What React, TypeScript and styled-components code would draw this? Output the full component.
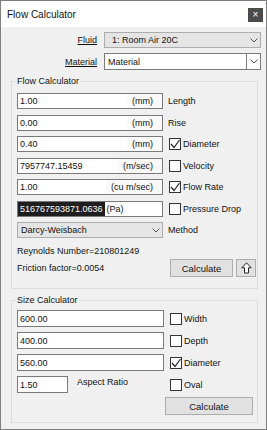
import * as React from 'react';
import styled, { createGlobalStyle } from 'styled-components';

const Global = createGlobalStyle`
  body {
    margin: 0;
    font-family: "Liberation Sans", Arial, sans-serif;
    font-size: 9px;
    color: #111;
  }
`;

const Window = styled.div`
  width: 267px;
  height: 430px;
  box-sizing: border-box;
  border: 1px solid #7f7f7f;
  background: #f0f0f0;
  display: flex;
  flex-direction: column;
`;

const TitleBar = styled.div`
  height: 26px;
  flex: 0 0 26px;
  background: #fff;
  display: flex;
  align-items: center;
  justify-content: space-between;
  padding: 1px 3px 0 6px;
  box-sizing: border-box;
  font-size: 10px;
`;

const CloseButton = styled.div`
  width: 15px;
  height: 14px;
  background: #4b4b4b;
  color: #fff;
  display: flex;
  align-items: center;
  justify-content: center;
  font-size: 10px;
  line-height: 1;
`;

const Body = styled.div`
  flex: 1;
  padding: 5px 5px 0 10px;
  display: flex;
  flex-direction: column;
`;

const TopGrid = styled.div`
  display: grid;
  grid-template-columns: 86px 157px;
  column-gap: 7px;
  row-gap: 5px;
  align-items: center;
`;

const TopLabel = styled.span`
  text-align: right;
  text-decoration: underline;
`;

const Combo = styled.div<{ $white?: boolean; $pad?: number }>`
  height: ${p => (p.$white ? 17 : 16)}px;
  box-sizing: border-box;
  border: 1px solid ${p => (p.$white ? '#7a7a7a' : '#adadad')};
  background: ${p => (p.$white ? '#fff' : '#e5e5e5')};
  display: flex;
  align-items: center;
  padding-left: ${p => p.$pad ?? 3}px;
  white-space: nowrap;
`;

const ComboText = styled.span`
  flex: 1;
`;

const ComboArrow = styled.div<{ $boxed?: boolean }>`
  width: 13px;
  height: 100%;
  display: flex;
  align-items: center;
  justify-content: center;
  border-left: ${p => (p.$boxed ? '1px solid #7a7a7a' : 'none')};
`;

const Group = styled.fieldset<{ $top: number; $bottom: number }>`
  margin: ${p => p.$top}px 3px 0 0;
  padding: 0 1px ${p => p.$bottom}px 5px;
  border: 1px solid #dcdcdc;
  min-width: 0;
`;

const Legend = styled.legend`
  padding: 0 1px;
  margin-left: -1px;
  line-height: 11px;
`;

const Rows = styled.div<{ $gap: number; $top: number }>`
  display: flex;
  flex-direction: column;
  gap: ${p => p.$gap}px;
  margin-top: ${p => p.$top}px;
`;

const Row = styled.div<{ $input: number; $h: number }>`
  display: grid;
  grid-template-columns: ${p => p.$input}px 1fr;
  column-gap: 5px;
  align-items: center;
  height: ${p => p.$h}px;
`;

const InputBox = styled.div<{ $w?: number }>`
  height: 100%;
  width: ${p => (p.$w ? `${p.$w}px` : 'auto')};
  box-sizing: border-box;
  border: 1px solid #7a7a7a;
  background: #fff;
  display: flex;
  align-items: stretch;
  white-space: nowrap;
`;

const Value = styled.span<{ $fit?: boolean; $selected?: boolean }>`
  flex: ${p => (p.$fit ? '0 0 auto' : '1')};
  display: flex;
  align-items: center;
  padding: 0 ${p => (p.$selected ? 2 : 0)}px 0 2px;
  background: ${p => (p.$selected ? '#1e1e1e' : 'transparent')};
  color: ${p => (p.$selected ? '#fff' : 'inherit')};
`;

const Unit = styled.span<{ $inline?: boolean }>`
  display: flex;
  align-items: center;
  padding: 0 9px 0 ${p => (p.$inline ? 2 : 5)}px;
  background: ${p => (p.$inline ? '#fff' : '#f9f9f9')};
`;

const SideLabel = styled.span`
  align-self: center;
`;

const Check = styled.label`
  display: flex;
  align-items: center;
  gap: 2px;
  padding-left: 1px;
`;

const Box = styled.span`
  width: 12px;
  height: 12px;
  box-sizing: border-box;
  border: 1px solid #333;
  background: #fff;
  display: flex;
  align-items: center;
  justify-content: center;
`;

const Results = styled.div`
  display: grid;
  grid-template-columns: 1fr auto;
  align-items: center;
  margin-top: 8px;
  row-gap: 3px;
`;

const Buttons = styled.div`
  display: flex;
  gap: 3px;
`;

const Button = styled.div<{ $w: number }>`
  width: ${p => p.$w}px;
  height: 18px;
  box-sizing: border-box;
  border: 1px solid #adadad;
  background: #e1e1e1;
  display: flex;
  align-items: center;
  justify-content: center;
  font-size: 9.5px;
`;

const AspectCell = styled.div`
  display: flex;
  height: 100%;
  gap: 9px;
`;

const AspectLabel = styled.span`
  padding-top: 1px;
`;

const Footer = styled.div`
  display: flex;
  justify-content: flex-end;
  margin: 4px 3px 0 0;
`;

const Chevron = () => (
  <svg width="8" height="5" viewBox="0 0 8 5">
    <polyline points="0.5,0.5 4,4 7.5,0.5" fill="none" stroke="#555" strokeWidth="1" />
  </svg>
);

const CheckBox: React.FC<{ checked?: boolean; label: string }> = ({ checked, label }) => (
  <Check>
    <Box>
      {checked && (
        <svg width="10" height="10" viewBox="0 0 10 10">
          <polyline points="1,5 4,8.5 9.5,1" fill="none" stroke="#222" strokeWidth="1.2" />
        </svg>
      )}
    </Box>
    {label}
  </Check>
);

const UpArrow = () => (
  <svg width="11" height="12" viewBox="0 0 11 12">
    <path d="M5.5 0.8 L10.2 5.8 H7.5 V11 H3.5 V5.8 H0.8 Z" fill="#fff" stroke="#222" strokeWidth="1" strokeLinejoin="round" />
  </svg>
);

export default function App() {
  return (
    <>
      <Global />
      <Window>
        <TitleBar>
          <span>Flow Calculator</span>
          <CloseButton>×</CloseButton>
        </TitleBar>
        <Body>
          <TopGrid>
            <TopLabel>Fluid</TopLabel>
            <Combo $pad={7}>
              <ComboText>1: Room Air 20C</ComboText>
              <ComboArrow><Chevron /></ComboArrow>
            </Combo>
            <TopLabel>Material</TopLabel>
            <Combo $white>
              <ComboText>Material</ComboText>
              <ComboArrow $boxed><Chevron /></ComboArrow>
            </Combo>
          </TopGrid>

          <Group $top={6} $bottom={11}>
            <Legend>Flow Calculator</Legend>
            <Rows $gap={5.5} $top={6}>
              <Row $input={146} $h={16}>
                <InputBox><Value>1.00</Value><Unit>(mm)</Unit></InputBox>
                <SideLabel>Length</SideLabel>
              </Row>
              <Row $input={146} $h={16}>
                <InputBox><Value>0.00</Value><Unit>(mm)</Unit></InputBox>
                <SideLabel>Rise</SideLabel>
              </Row>
              <Row $input={146} $h={16}>
                <InputBox><Value>0.40</Value><Unit>(mm)</Unit></InputBox>
                <CheckBox checked label="Diameter" />
              </Row>
              <Row $input={146} $h={16}>
                <InputBox><Value>7957747.15459</Value><Unit>(m/sec)</Unit></InputBox>
                <CheckBox label="Velocity" />
              </Row>
              <Row $input={146} $h={16}>
                <InputBox><Value>1.00</Value><Unit>(cu m/sec)</Unit></InputBox>
                <CheckBox checked label="Flow Rate" />
              </Row>
              <Row $input={146} $h={16}>
                <InputBox><Value $fit $selected>516767593871.0636</Value><Unit $inline>(Pa)</Unit></InputBox>
                <CheckBox label="Pressure Drop" />
              </Row>
              <Row $input={146} $h={16}>
                <Combo>
                  <ComboText>Darcy-Weisbach</ComboText>
                  <ComboArrow><Chevron /></ComboArrow>
                </Combo>
                <SideLabel>Method</SideLabel>
              </Row>
            </Rows>
            <Results>
              <span>Reynolds Number=210801249</span>
              <span />
              <span>Friction factor=0.0054</span>
              <Buttons>
                <Button $w={63}>Calculate</Button>
                <Button $w={20}><UpArrow /></Button>
              </Buttons>
            </Results>
          </Group>

          <Group $top={6} $bottom={7}>
            <Legend>Size Calculator</Legend>
            <Rows $gap={5} $top={4}>
              <Row $input={147} $h={17}>
                <InputBox><Value>600.00</Value></InputBox>
                <CheckBox label="Width" />
              </Row>
              <Row $input={147} $h={17}>
                <InputBox><Value>400.00</Value></InputBox>
                <CheckBox label="Depth" />
              </Row>
              <Row $input={147} $h={17}>
                <InputBox><Value>560.00</Value></InputBox>
                <CheckBox checked label="Diameter" />
              </Row>
              <Row $input={147} $h={17}>
                <AspectCell>
                  <InputBox $w={51}><Value>1.50</Value></InputBox>
                  <AspectLabel>Aspect Ratio</AspectLabel>
                </AspectCell>
                <CheckBox label="Oval" />
              </Row>
            </Rows>
            <Footer>
              <Button $w={88}>Calculate</Button>
            </Footer>
          </Group>
        </Body>
      </Window>
    </>
  );
}
